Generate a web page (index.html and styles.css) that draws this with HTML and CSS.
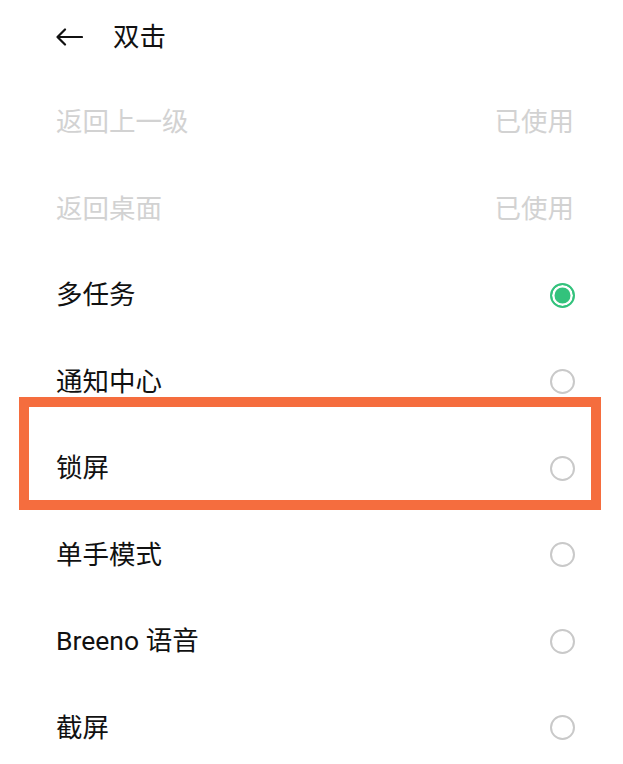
FILE: index.html
```
<!DOCTYPE html>
<html lang="zh-CN">
<head>
<meta charset="utf-8">
<title>双击</title>
<link rel="stylesheet" href="styles.css">
</head>
<body>
<div class="page">
  <header class="header">
    <svg class="back" width="28" height="18" viewBox="0 0 28 18" aria-hidden="true">
      <path d="M27 9 H2.5 M10 1.5 L2.5 9 L10 16.5" fill="none" stroke="#111" stroke-width="2.2" stroke-linecap="round" stroke-linejoin="round"/>
    </svg>
    <h1 class="title">双击</h1>
  </header>
  <ul class="list">
    <li class="row row-disabled"><span class="label">返回上一级</span><span class="status">已使用</span></li>
    <li class="row row-disabled"><span class="label">返回桌面</span><span class="status">已使用</span></li>
    <li class="row"><span class="label">多任务</span><span class="radio radio-on"></span></li>
    <li class="row"><span class="label">通知中心</span><span class="radio"></span></li>
    <li class="row row-marked"><span class="label">锁屏</span><span class="radio"></span><span class="highlight"></span></li>
    <li class="row"><span class="label">单手模式</span><span class="radio"></span></li>
    <li class="row"><span class="label">Breeno 语音</span><span class="radio"></span></li>
    <li class="row"><span class="label">截屏</span><span class="radio"></span></li>
  </ul>
</div>
</body>
</html>
```
FILE: styles.css
```
html, body {
  margin: 0;
  padding: 0;
  background: #ffffff;
}
body {
  font-family: Roboto, "Noto Sans CJK SC", sans-serif;
  color: #111111;
}
.page {
  width: 623px;
  height: 764px;
  overflow: hidden;
}
.header {
  height: 74px;
  display: flex;
  align-items: center;
  padding-left: 55px;
  gap: 30px;
}
.back {
  display: block;
  flex: none;
}
.title {
  margin: 0;
  font-size: 26.5px;
  font-weight: 400;
  line-height: 1;
  color: #111111;
}
.list {
  list-style: none;
  margin: 5px 0 0 0;
  padding: 0;
}
.row {
  position: relative;
  height: 86.5px;
  display: flex;
  align-items: center;
  justify-content: space-between;
  padding: 0 48px 0 56px;
  font-size: 26.5px;
  line-height: 1;
}
.row-disabled {
  color: #d2d2d2;
  padding-right: 49px;
}
.status {
  color: #d2d2d2;
}
.radio {
  box-sizing: border-box;
  width: 25px;
  height: 25px;
  border-radius: 50%;
  border: 2px solid #c9c9c9;
  flex: none;
}
.radio-on {
  border-color: #33c27c;
  background: #33c27c;
  box-shadow: inset 0 0 0 2.5px #ffffff;
}
.highlight {
  position: absolute;
  left: 18.5px;
  top: -28px;
  width: 582.5px;
  height: 113px;
  box-sizing: border-box;
  border: 10px solid #f56d3e;
  pointer-events: none;
}
```
